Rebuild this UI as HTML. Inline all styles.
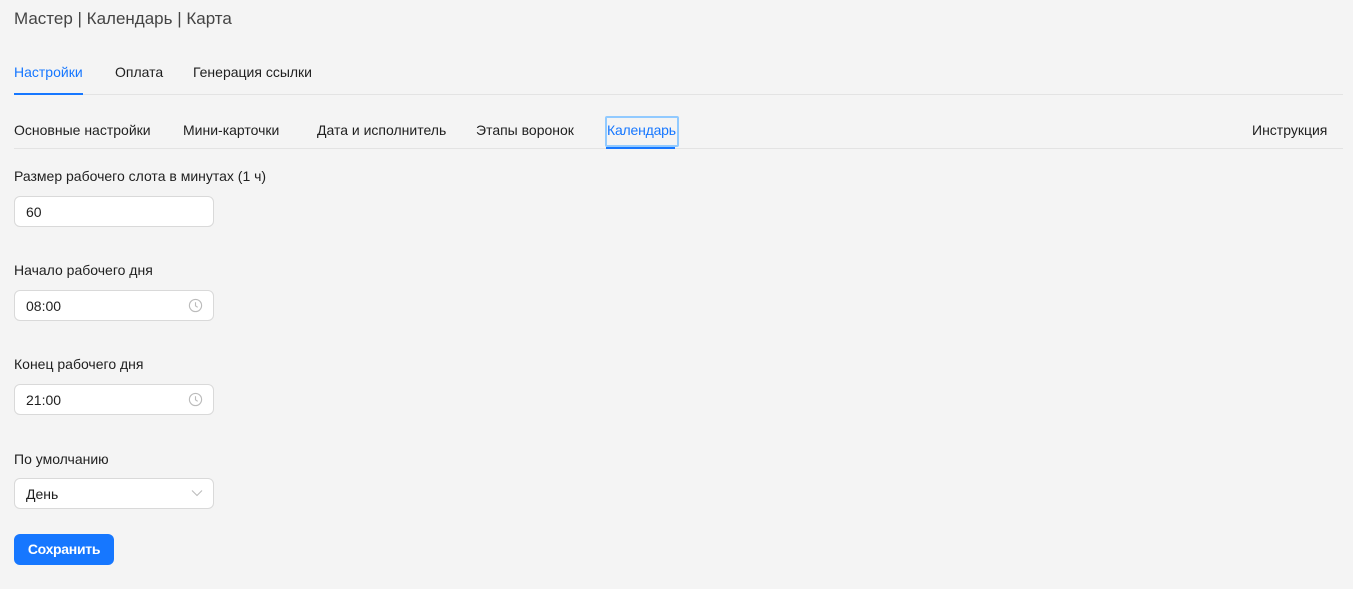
<!DOCTYPE html>
<html><head><meta charset="utf-8"><style>
body{margin:0;width:1353px;height:589px;background:#f4f4f4;font-family:"Liberation Sans",sans-serif;color:#1f1f1f;position:relative;overflow:hidden;font-size:14px}
.a{position:absolute;white-space:nowrap;line-height:1}
.inp{position:absolute;left:14px;width:198px;height:29px;background:#fff;border:1px solid #d9d9d9;border-radius:6px;box-sizing:content-box}
.inp span{position:absolute;left:11px;top:8px;font-size:14px;line-height:1}
.ic{position:absolute;right:10px;top:7px}
</style></head><body>
<div class="a" style="left:14px;top:10px;font-size:17px;color:#444">Мастер | Календарь | Карта</div>
<div class="a" style="left:14px;top:65px;color:#1677ff">Настройки</div>
<div class="a" style="left:115px;top:65px">Оплата</div>
<div class="a" style="left:193px;top:65px">Генерация ссылки</div>
<div style="position:absolute;left:14px;top:94px;width:1329px;height:1px;background:#e3e3e3"></div>
<div style="position:absolute;left:14px;top:93px;width:69px;height:2px;background:#1677ff"></div>
<div class="a" style="left:14px;top:123px">Основные настройки</div>
<div class="a" style="left:183px;top:123px">Мини-карточки</div>
<div class="a" style="left:317px;top:123px">Дата и исполнитель</div>
<div class="a" style="left:476px;top:123px">Этапы воронок</div>
<div style="position:absolute;left:605px;top:116px;width:70px;height:27px;border:2px solid #91caff;border-radius:2px"></div>
<div class="a" style="left:607px;top:123px;color:#1677ff;letter-spacing:-0.2px">Календарь</div>
<div class="a" style="left:1252px;top:123px">Инструкция</div>
<div style="position:absolute;left:14px;top:148px;width:1329px;height:1px;background:#e3e3e3"></div>
<div style="position:absolute;left:606px;top:147px;width:69px;height:2px;background:#1677ff"></div>
<div class="a" style="left:14px;top:169px">Размер рабочего слота в минутах (1 ч)</div>
<div class="inp" style="top:196px"><span>60</span></div>
<div class="a" style="left:14px;top:263px">Начало рабочего дня</div>
<div class="inp" style="top:290px"><span>08:00</span><svg class="ic" width="15" height="15" viewBox="0 0 16 16"><circle cx="8" cy="8" r="6.5" fill="none" stroke="#bbb" stroke-width="1.2"/><path d="M8 4.5V8.3l2.3 1.6" fill="none" stroke="#bbb" stroke-width="1.2"/></svg></div>
<div class="a" style="left:14px;top:357px">Конец рабочего дня</div>
<div class="inp" style="top:384px"><span>21:00</span><svg class="ic" width="15" height="15" viewBox="0 0 16 16"><circle cx="8" cy="8" r="6.5" fill="none" stroke="#bbb" stroke-width="1.2"/><path d="M8 4.5V8.3l2.3 1.6" fill="none" stroke="#bbb" stroke-width="1.2"/></svg></div>
<div class="a" style="left:14px;top:452px">По умолчанию</div>
<div class="inp" style="top:478px"><span>День</span><svg class="ic" style="top:10px" width="12" height="8" viewBox="0 0 12 8"><path d="M1 1.5l5 5 5-5" fill="none" stroke="#bbb" stroke-width="1.1"/></svg></div>
<div style="position:absolute;left:14px;top:534px;width:100px;height:31px;background:#1677ff;border-radius:6px;color:#fff;font-size:14px;font-weight:bold;line-height:31px;text-align:center;letter-spacing:-0.3px">Сохранить</div>
</body></html>
